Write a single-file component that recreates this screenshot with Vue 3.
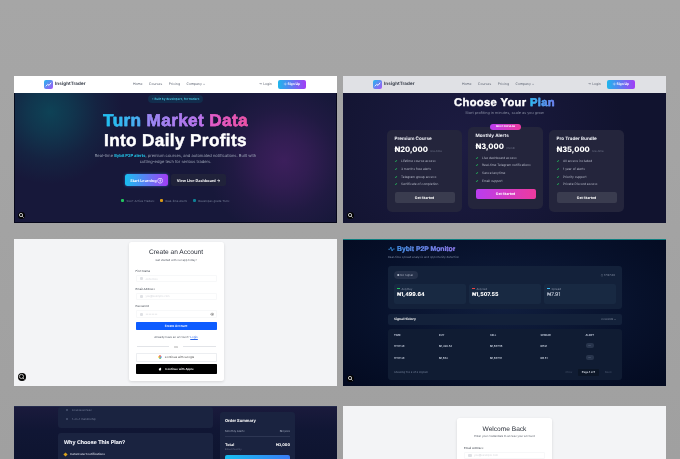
<script setup>
const links = ['Home', 'Courses', 'Pricing', 'Company ⌄']
const stats = [
  { c: '#22c55e', t: '500+ Active Traders' },
  { c: '#d99a16', t: 'Real-time Alerts' },
  { c: '#0e7f95', t: 'Developer-grade Tools' }
]
const plans = [
  { name: 'Premium Course', price: '₦20,000', per: 'one-time', items: ['Lifetime course access', '3 months free alerts', 'Telegram group access', 'Certificate of completion'] },
  { name: 'Monthly Alerts', price: '₦3,000', per: '/month', hot: true, items: ['Live dashboard access', 'Real-time Telegram notifications', 'Cancel anytime', 'Email support'] },
  { name: 'Pro Trader Bundle', price: '₦35,000', per: 'one-time', items: ['All access included', '1 year of alerts', 'Priority support', 'Private Discord access'] }
]
const fields = [
  { label: 'First Name', ph: 'John Doe' },
  { label: 'Email Address', ph: 'you@example.com' },
  { label: 'Password', ph: '••••••••', eye: true }
]
const metrics = [
  { c: '#22c55e', l: 'Avg Buy', v: '₦1,499.64', b: true },
  { c: '#ef4444', l: 'Avg Sell', v: '₦1,507.55', b: true },
  { c: '#38bdf8', l: 'Spread', v: '₦7.91', b: false }
]
const signals = [
  ['17:57:30', '₦1,499.64', '₦1,507.55', '₦7.91'],
  ['17:57:30', '₦1,502', '₦1,507.51', '₦5.51']
]
</script>

<template>
  <main class="sheet">
    <section class="thumb hero">
      <header class="nav">
        <div class="brand"><span class="logo"><svg viewBox="0 0 10 10"><path d="M2 7 4.200 4.800 5.600 6 8 3" fill="none" stroke="#fff" stroke-width="1" /></svg></span><b>InsightTrader</b></div>
        <nav class="links"><span v-for="l in links" :key="l">{{ l }}</span></nav>
        <div class="auth"><span>⇥ Login</span><span class="signup">⊹ Sign Up</span></div>
      </header>
      <div class="hero-body">
        <span class="badge">⚡ Built by developers, for traders</span>
        <h1><span class="grad w1">Turn</span> <span class="grad w2">Market</span> <span class="grad w3">Data</span><br />Into Daily Profits</h1>
        <p>Real-time <b>Bybit P2P alerts</b>, premium courses, and automated notifications. Built with<br />cutting-edge tech for serious traders.</p>
        <div class="cta"><span class="primary">Start Learning ⊕</span><span class="secondary">View Live Dashboard →</span></div>
        <div class="stats"><span v-for="s in stats" :key="s.t"><i :style="{ background: s.c }"></i>{{ s.t }}</span></div>
      </div>
      <span class="lens"><svg viewBox="0 0 10 10"><circle cx="4.300" cy="4.300" r="2.300" fill="none" stroke="#ddd" stroke-width="1.200" /><path d="M6 6 8 8" stroke="#ddd" stroke-width="1.200" /></svg></span>
    </section>

    <section class="thumb pricing">
      <header class="nav dim">
        <div class="brand"><span class="logo"><svg viewBox="0 0 10 10"><path d="M2 7 4.200 4.800 5.600 6 8 3" fill="none" stroke="#fff" stroke-width="1" /></svg></span><b>InsightTrader</b></div>
        <nav class="links"><span v-for="l in links" :key="l">{{ l }}</span></nav>
        <div class="auth"><span>⇥ Login</span><span class="signup">⊹ Sign Up</span></div>
      </header>
      <h2>Choose Your <span class="plan-word">Plan</span></h2>
      <p class="lead">Start profiting in minutes, scale as you grow</p>
      <div class="plans">
        <article v-for="p in plans" :key="p.name" class="plan" :class="{ hot: p.hot }">
          <span v-if="p.hot" class="popular">MOST POPULAR</span>
          <h3>{{ p.name }}</h3>
          <div class="price"><strong>{{ p.price }}</strong><small>{{ p.per }}</small></div>
          <ul><li v-for="i in p.items" :key="i"><em>✓</em>{{ i }}</li></ul>
          <span class="get">Get Started</span>
        </article>
      </div>
      <span class="lens"><svg viewBox="0 0 10 10"><circle cx="4.300" cy="4.300" r="2.300" fill="none" stroke="#ddd" stroke-width="1.200" /><path d="M6 6 8 8" stroke="#ddd" stroke-width="1.200" /></svg></span>
    </section>

    <section class="thumb light">
      <div class="form-card">
        <h4>Create an Account</h4>
        <p class="hint">Get started with our app today!</p>
        <div v-for="f in fields" :key="f.label" class="field">
          <label>{{ f.label }}</label>
          <div class="input"><i class="ico"></i><span>{{ f.ph }}</span><svg v-if="f.eye" class="eye" viewBox="0 0 10 10"><path d="M1 5c2-3 6-3 8 0-2 3-6 3-8 0Z" fill="none" stroke="#555" /><circle cx="5" cy="5" r="1.200" fill="#555" /></svg></div>
        </div>
        <span class="create">Create Account</span>
        <p class="have">Already have an account? <a>Login</a></p>
        <div class="or"><i></i><span>OR</span><i></i></div>
        <span class="social google"><svg viewBox="0 0 10 10"><path d="M8 2.300A4 4 0 0 1 9 5a4 4 0 0 1-1.200 2.900L5 5Z" fill="#4285f4" /><path d="M7.800 7.900A4 4 0 0 1 2 7.700L5 5Z" fill="#34a853" /><path d="M2 7.700A4 4 0 0 1 2 2.300L5 5Z" fill="#fbbc05" /><path d="M2 2.300A4 4 0 0 1 8 2.300L5 5Z" fill="#ea4335" /></svg>Continue with Google</span>
        <span class="social apple"><svg viewBox="0 0 10 10"><path d="M5 3C6 2.400 8 2.500 8 3.500 6.800 4.500 7 6 8.200 6.500 7.700 8 6.800 9.200 5.800 9 5.200 8.800 4.800 8.800 4.200 9 3 9 1.800 6.800 2 5 2.300 3 4 2.600 5 3ZM5 2.500C5 1.500 5.800.8 6.500.8 6.500 1.800 5.800 2.500 5 2.500Z" fill="#fff" /></svg>Continue with Apple</span>
      </div>
      <span class="lens big"><svg viewBox="0 0 10 10"><circle cx="4.300" cy="4.300" r="2.600" fill="none" stroke="#ddd" stroke-width="1" /><path d="M6 6 8 8" stroke="#ddd" stroke-width="1" /></svg></span>
    </section>

    <section class="thumb monitor">
      <div class="mon-inner">
        <h5><svg viewBox="0 0 12 10"><path d="M.5 5.500H3.500L5 1.500 7 8.500 8.500 5H11.500" fill="none" stroke="#3b9cf0" stroke-width="1.200" /></svg><span>Bybit P2P Monitor</span></h5>
        <p class="mon-sub">Real-time spread analysis and opportunity detection</p>
        <div class="mon-panel">
          <div class="mon-top"><span class="no-signal">● No Signal</span><span class="clock">◷ 17:57:30</span></div>
          <div class="metrics">
            <div v-for="m in metrics" :key="m.l" class="metric">
              <span class="m-label"><i :style="{ background: m.c }"></i>{{ m.l }}</span>
              <b :class="{ muted: !m.b }">{{ m.v }}</b>
            </div>
          </div>
        </div>
        <div class="history"><b>Signal History</b><span>3 records ⌄</span></div>
        <div class="table">
          <div class="t-row t-head"><span>TIME</span><span>BUY</span><span>SELL</span><span>SPREAD</span><span>ALERT</span></div>
          <div v-for="(s, n) in signals" :key="n" class="t-row">
            <span v-for="c in s" :key="c">{{ c }}</span><span><i class="alert">—</i></span>
          </div>
          <div class="t-foot"><span>Showing 1 to 2 of 2 signals</span><div class="pager"><span>‹ Prev</span><b>Page 1 of 1</b><span>Next ›</span></div></div>
        </div>
      </div>
      <span class="lens"><svg viewBox="0 0 10 10"><circle cx="4.300" cy="4.300" r="2.300" fill="none" stroke="#ddd" stroke-width="1.200" /><path d="M6 6 8 8" stroke="#ddd" stroke-width="1.200" /></svg></span>
    </section>

    <section class="thumb checkout">
      <div class="co-left">
        <div class="co-panel first"><span><i></i>Course access</span><span><i></i>1-on-1 mentorship</span></div>
        <div class="co-panel second"><h6>Why Choose This Plan?</h6><span class="why"><i></i>Instant alert notifications</span></div>
      </div>
      <aside class="summary">
        <b class="s-title">Order Summary</b>
        <div class="s-row"><span>Monthly Alerts</span><span>₦3,000</span></div>
        <div class="s-total"><b>Total</b><b>₦3,000</b></div>
        <small>Billed monthly</small>
        <span class="pay"></span>
      </aside>
    </section>

    <section class="thumb light login">
      <div class="form-card short">
        <h4>Welcome Back</h4>
        <p class="hint">Enter your credentials to access your account</p>
        <div class="field"><label>Email Address</label><div class="input"><i class="ico"></i><span>you@example.com</span></div></div>
      </div>
    </section>
  </main>
</template>

<style>
html, body { margin: 0; background: #a2a2a2; overflow: hidden; }
</style>

<style scoped>
.sheet {
  width: 680px; height: 459px; box-sizing: border-box; overflow: hidden;
  padding: 76px 14px 0; display: grid;
  grid-template-columns: 323px 323px; grid-template-rows: 147px 147px 147px;
  column-gap: 6px; row-gap: 16px;
  background: linear-gradient(#a6a6a6, #a0a0a0);
  font-family: Inter, "DejaVu Sans", sans-serif;
  text-rendering: geometricPrecision;
}
.thumb { position: relative; overflow: hidden; filter: blur(.45px); min-width: 0; }
.thumb:nth-child(n+5) { margin-top: 4px; height: 60px; }
p, h1, h2, h3, h4, h5, h6, ul { margin: 0; padding: 0; }

.nav { height: 16.500px; background: #fff; display: flex; align-items: center; padding: 0 31px 0 30px; position: relative; color: #5b6270; font-size: 3.400px; }
.nav.dim { background: #e0e1e5; }
.brand { display: flex; align-items: center; gap: 2px; width: 89px; color: #3a404c; font-size: 4.500px; letter-spacing: .1px; }
.logo { width: 9px; height: 9px; border-radius: 2px; background: linear-gradient(135deg, #22b8ee, #a855f7); display: block; }
.logo svg { display: block; }
.links { display: flex; gap: 6.500px; width: 124px; }
.auth { display: flex; align-items: center; gap: 6px; margin-left: auto; }
.signup { width: 28px; height: 9.500px; border-radius: 2px; background: linear-gradient(90deg, #1fb6ec, #a23df5); color: #fff; font-weight: 700; display: flex; align-items: center; justify-content: center; }

.hero { background:
  radial-gradient(circle at 36px 36px, #0e4256 0, rgba(14,66,86,.7) 22px, rgba(14,66,86,.25) 48px, rgba(14,66,86,0) 72px),
  radial-gradient(circle at 270px 85px, #3c1f5c 0, rgba(60,31,92,.7) 25px, rgba(60,31,92,.25) 52px, rgba(60,31,92,0) 78px),
  #17183a; }
.hero::after { content: ""; position: absolute; inset: 0; border: 1px solid rgba(2,4,20,.8); pointer-events: none; }
.hero .nav { z-index: 1; }
.hero-body { display: flex; flex-direction: column; align-items: center; color: #fff; padding-top: 2px; }
.badge { height: 8px; padding: 0 4px; border-radius: 4px; background: #122c4c; color: #49cbe8; font-size: 3px; line-height: 8px; font-weight: 600; }
h1 { font-family: "Liberation Sans", sans-serif; font-size: 17.200px; line-height: 20px; font-weight: 700; text-align: center; margin-top: 7.500px; letter-spacing: .35px; -webkit-text-stroke: .45px #fff; }
.grad { -webkit-background-clip: text; background-clip: text; color: transparent; }
.w1 { background-image: linear-gradient(90deg, #14c6ee, #5aa6f2); -webkit-text-stroke: .45px #35b6f0; }
.w2 { background-image: linear-gradient(90deg, #8f8df5, #c56ee8); -webkit-text-stroke: .45px #ab7df0; }
.w3 { background-image: linear-gradient(90deg, #dc5fd2, #f0519f); -webkit-text-stroke: .45px #e858bb; }
.hero-body p { font-size: 4.050px; line-height: 6.300px; color: #9aa2b4; text-align: center; margin-top: 3px; }
.hero-body p b { color: #22c4e8; }
.cta { display: flex; gap: 3px; margin-top: 8.400px; font-size: 3.800px; font-weight: 700; }
.cta span { height: 12.500px; display: flex; align-items: center; justify-content: center; border-radius: 2.500px; }
.primary { width: 43px; background: linear-gradient(90deg, #18bff0, #a23df5); box-shadow: 0 0 3px rgba(60,130,240,.6); }
.secondary { width: 55px; background: #20223a; }
.stats { display: flex; gap: 6px; margin-top: 12.500px; font-size: 2.900px; line-height: 4px; color: #79829a; }
.stats span { display: flex; align-items: center; gap: 2px; }
.stats i { width: 3px; height: 3px; border-radius: 1px; }

.lens { position: absolute; left: 4px; bottom: 4px; width: 7px; height: 7px; border-radius: 50%; background: #050505; display: block; }
.lens svg { display: block; width: 100%; height: 100%; }
.lens.big { left: 3.500px; bottom: 5.500px; width: 8px; height: 8px; }

.pricing { background: radial-gradient(circle at 120px 70px, #1d1c42, #11132f 75%), #14152f; color: #fff; text-align: center; }
.pricing .nav { text-align: left; }
h2 { font-family: "Liberation Sans", sans-serif; font-size: 11.200px; line-height: 14px; font-weight: 700; letter-spacing: .35px; margin-top: 3px; -webkit-text-stroke: .4px #fff; }
.plan-word { background-image: linear-gradient(90deg, #22c0ee, #8a6bf5); -webkit-background-clip: text; background-clip: text; color: transparent; -webkit-text-stroke: .4px #4fa5f0; }
.lead { font-size: 3.800px; color: #858ba0; line-height: 6px; margin-top: .5px; }
.plans { display: flex; justify-content: center; gap: 6px; margin-top: 10.500px; margin-left: 2px; text-align: left; align-items: flex-start; }
.plan { width: 75px; height: 82px; box-sizing: border-box; padding: 7px 7.500px 0; background: #24253c; border-radius: 5px; position: relative; margin-top: 3.500px; }
.plan.hot { margin-top: 0; }
.popular { position: absolute; top: -2.500px; left: 22px; width: 31px; height: 6px; border-radius: 3px; background: linear-gradient(90deg, #b93df0, #ec3aa0); font-size: 2.400px; line-height: 6px; text-align: center; font-weight: 700; }
h3 { font-size: 4.600px; line-height: 6px; font-weight: 700; color: #eef0f6; }
.price { display: flex; align-items: baseline; gap: 2px; margin-top: 2px; height: 10px; }
.price strong { font-size: 7.500px; line-height: 10px; font-weight: 800; }
.price small { font-size: 2.800px; color: #6e7388; }
ul { list-style: none; margin-top: 3.200px; }
li { font-size: 3.200px; line-height: 7.650px; color: #b3b7c6; white-space: nowrap; }
li em { font-style: normal; color: #22c55e; font-weight: 800; display: inline-block; width: 6.500px; }
.get { display: flex; align-items: center; justify-content: center; height: 10.500px; margin-top: 3.500px; border-radius: 2px; background: #3a3c4f; font-size: 3.500px; font-weight: 700; }
.hot .get { background: linear-gradient(90deg, #b93df0, #ee3a9e); }

.light { background: #f3f4f6; display: flex; justify-content: center; }
.form-card { width: 95px; height: 139px; box-sizing: border-box; margin-top: 3px; padding: 6px 7px; background: #fff; border-radius: 2.500px; box-shadow: 0 1px 3px rgba(0,0,0,.12); color: #2f3540; text-align: center; position: relative; left: .5px; }
h4 { font-size: 6.600px; line-height: 9px; font-weight: 500; color: #2b303a; font-family: "Liberation Sans", sans-serif; }
.hint { font-size: 2.800px; line-height: 5px; color: #555b66; margin-top: .5px; }
.field { text-align: left; margin-top: 6.500px; }
.field + .field { margin-top: 4.400px; }
.field label { display: block; font-size: 2.900px; line-height: 4px; color: #3c424c; }
.input { height: 7.300px; margin-top: 2px; border: .5px solid #f7f8f9; border-radius: 1px; display: flex; align-items: center; gap: 2.500px; font-size: 2.700px; color: #d4d6db; padding: 0 1.500px 0 3px; box-sizing: border-box; }
.ico { width: 3.500px; height: 3px; background: #dfe1e5; border-radius: 1px; }
.eye { width: 4.500px; height: 4.500px; margin-left: auto; }
.create { display: flex; align-items: center; justify-content: center; height: 8.500px; margin-top: 4px; background: #0d5cff; color: #fff; font-size: 3px; font-weight: 600; border-radius: .8px; }
.have { font-size: 2.900px; line-height: 5px; color: #555b66; margin-top: 5px; }
.have a { color: #2563eb; text-decoration: underline; }
.or { display: flex; align-items: center; gap: 5px; font-size: 2.700px; color: #888; margin-top: 4px; height: 5px; padding: 0 1px; }
.or i { flex: 1; height: .5px; background: #e2e4e8; }
.social { display: flex; align-items: center; justify-content: center; gap: 3px; font-size: 2.900px; border-radius: .8px; box-sizing: border-box; }
.social svg { width: 4px; height: 4px; }
.google { height: 9px; margin-top: 3.500px; border: .5px solid #eceef1; color: #444; }
.apple { height: 10.500px; margin-top: 2px; background: #000; color: #fff; font-weight: 600; }

.monitor { background: radial-gradient(ellipse at 50% 45%, #101e3e 0, #07112b 60%, #030a20 100%); border-top: 1px solid #0f7f80; box-sizing: border-box; color: #fff; }
.mon-inner { width: 234px; margin-left: 45px; }
h5 { display: flex; align-items: center; gap: 2px; font-family: "Liberation Sans", sans-serif; font-size: 6.800px; line-height: 9px; font-weight: 700; margin-top: 4.500px; -webkit-text-stroke: .15px #fff; }
h5 svg { width: 7px; height: 6px; }
h5 span { background-image: linear-gradient(90deg, #3b9cf0, #a678f5); -webkit-background-clip: text; background-clip: text; color: transparent; -webkit-text-stroke: .15px #6f8df2; }
.mon-sub { font-size: 2.900px; line-height: 4px; color: #7d8aa3; margin-top: 1.500px; }
.mon-panel { height: 43px; margin-top: 6.500px; background: #13213a; border-radius: 3px; box-sizing: border-box; padding: 5px 6px; }
.mon-top { display: flex; justify-content: space-between; align-items: center; height: 8px; }
.no-signal { height: 8px; line-height: 8px; width: 24px; box-sizing: border-box; padding-left: 3px; border-radius: 4px; background: #25314a; font-size: 2.800px; color: #b0b8c9; }
.clock { font-size: 2.800px; color: #8f99ad; padding-right: 1px; }
.metrics { display: flex; gap: 3px; margin-top: 5px; }
.metric { flex: 1; height: 20px; background: #182942; border-radius: 2px; box-sizing: border-box; padding: 3px; display: flex; flex-direction: column; gap: 1px; }
.m-label { font-size: 2.800px; line-height: 4px; color: #8f99ad; display: flex; align-items: center; gap: 1.500px; }
.m-label i { width: 3px; height: 1.500px; }
.metric b { font-size: 5.300px; line-height: 7px; font-weight: 800; }
.metric b.muted { font-weight: 500; color: #c3cad8; }
.history { height: 11px; margin-top: 5px; display: flex; align-items: center; justify-content: space-between; padding: 0 6px; border-radius: 2px; background: #13213a; font-size: 3.200px; }
.history span { font-size: 2.700px; color: #8f99ad; }
.table { height: 51px; margin-top: 4px; background: #101c33; border-radius: 3px; box-sizing: border-box; padding: 1px 6px; }
.t-row { display: grid; grid-template-columns: 45px 51px 50.500px 45px 1fr; align-items: center; height: 12.300px; font-size: 2.600px; color: #c5cddc; font-weight: 600; }
.t-head { height: 10px; color: #b9c2d3; font-weight: 700; }
.alert { display: block; width: 8px; height: 5px; border-radius: 2px; background: #27344c; text-align: center; line-height: 5px; font-style: normal; color: #7a86a0; }
.t-foot { display: flex; align-items: center; justify-content: space-between; margin-top: 3px; font-size: 2.700px; color: #7d8aa3; height: 10px; }
.pager { display: flex; align-items: center; gap: 2px; }
.pager span { width: 15px; text-align: center; color: #4e5a72; }
.pager b { width: 21px; text-align: center; padding: 1.500px 0; background: #0b1526; color: #d0d6e2; border-radius: 1px; }

.checkout { background: linear-gradient(180deg, #1a1a3c, #101634 40%, #0e142f); display: flex; gap: 7px; padding-left: 44px; border-top: 1px solid #232a4c; box-sizing: border-box; color: #fff; }
.co-left { width: 155px; display: flex; flex-direction: column; gap: 5px; }
.co-panel { background: #1a2340; border-radius: 3px; box-sizing: border-box; }
.first { height: 21px; padding: 0 6px 0 8px; display: flex; flex-direction: column; gap: 4.500px; font-size: 2.800px; color: #77809a; flex: none; }
.first span { display: flex; align-items: center; gap: 4px; line-height: 4px; }
.first span:first-child { margin-top: 1px; }
.first i { width: 2px; height: 2px; background: #4a5470; border-radius: 50%; }
.second { height: 40px; padding: 7px 6px; flex: none; }
h6 { font-family: "Liberation Sans", sans-serif; font-size: 5.400px; line-height: 7px; font-weight: 700; color: #eef0f7; -webkit-text-stroke: .1px #eef0f7; }
.why { display: flex; align-items: center; gap: 3px; font-size: 2.900px; font-weight: 600; color: #d0d5e2; margin-top: 5px; }
.why i { width: 3px; height: 3px; background: #d9a21b; transform: rotate(45deg); }
.summary { width: 75px; height: 60px; margin-top: 4.500px; box-sizing: border-box; padding: 6px 5px; background: #1a2340; border-radius: 3px; display: flex; flex-direction: column; }
.s-title { font-size: 4px; line-height: 5px; }
.s-row { display: flex; justify-content: space-between; font-size: 2.900px; color: #a1a9bc; margin-top: 6.500px; padding-bottom: 3px; border-bottom: .5px solid #2d3653; }
.s-total { display: flex; justify-content: space-between; font-size: 3.800px; margin-top: 5px; }
.summary small { font-size: 2.500px; color: #6e7690; margin-top: 1px; line-height: 4px; }
.pay { display: block; height: 12px; margin-top: 3px; border-radius: 2px; background: linear-gradient(90deg, #18bff0, #3a7df5); flex: none; }

.login { background: #f3f4f6; }
.short { height: 60px; margin-top: 12px; padding-top: 6.500px; left: 0; border-radius: 2.500px; }
.short .hint { margin-top: 0; }
.short .field { margin-top: 7px; }
</style>
